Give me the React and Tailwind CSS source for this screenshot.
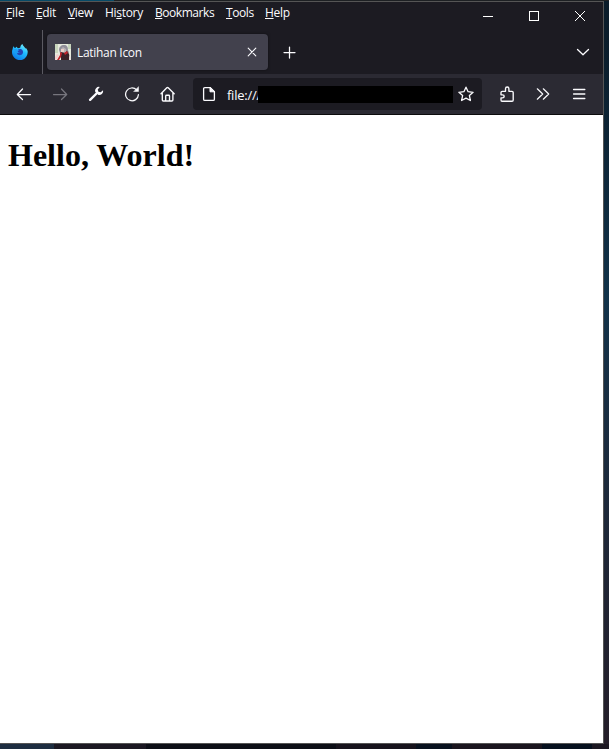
const UI = "font-['Open_Sans','Noto_Sans',sans-serif]";

const menus = [
  { pre: '', key: 'F', post: 'ile', cls: 'w-[30px] tracking-[-0.1px]' },
  { pre: '', key: 'E', post: 'dit', cls: 'w-8 tracking-[-0.35px]' },
  { pre: '', key: 'V', post: 'iew', cls: 'w-[37px] tracking-[-0.3px]' },
  { pre: 'Hi', key: 's', post: 'tory', cls: 'w-[50px] tracking-[-0.3px]' },
  { pre: '', key: 'B', post: 'ookmarks', cls: 'w-[71px] tracking-[-0.45px]' },
  { pre: '', key: 'T', post: 'ools', cls: 'w-[39px] tracking-[-0.4px]' },
  { pre: '', key: 'H', post: 'elp', cls: 'w-[30px] tracking-[-0.3px]' },
];

function Icon({ children, size = 16, className = '' }) {
  return (
    <svg width={size} height={size} viewBox={`0 0 ${size} ${size}`} fill="none" stroke="currentColor"
      strokeWidth="1.25" strokeLinecap="round" strokeLinejoin="round" className={`shrink-0 ${className}`}>
      {children}
    </svg>
  );
}

function ToolButton({ children, className = '' }) {
  return <button className={`flex h-8 w-9 shrink-0 items-center justify-center ${className}`}>{children}</button>;
}

function FirefoxLogo() {
  return (
    <svg width="16" height="16" viewBox="0 0 16 16" className="shrink-0">
      <defs>
        <linearGradient id="body" x1="0.85" y1="0" x2="0.3" y2="1">
          <stop offset="0" stopColor="#7df0fb" />
          <stop offset="0.45" stopColor="#1fbcff" />
          <stop offset="1" stopColor="#0b78ea" />
        </linearGradient>
      </defs>
      <path d="M15.7 7.2C15.3 5.4 14.3 4.2 13.5 3.7l.2 1.2C12.7 2.5 10.6 2 10.5 0 8.8 1 8.3 2.7 8.2 3.8c-.9 0-1.6.2-2.2.5C5 3.7 4.8 2.7 4.8 2.7 3.9 3.1 3.2 4 3.2 4L2.4 3.8C2 3.2 2 2.3 2 2.3 1 3 .7 4.3.7 4.8.1 5.9 0 7.1 0 8.2c0 4.3 3.6 7.8 8 7.8s8-3.6 7.7-8.8z" fill="url(#body)" />
      <path d="M6.2 5.6c1.2-1 3.3-.8 4.3.6 1 1.5.6 3.7-1 4.5-1.6.9-3.9.4-4.5-1.1L4.5 7.8z" fill="#2443b5" />
      <path d="M2.2 5.4c.9-.5 1.9-.3 2.7.1.8.6 1.4.6 2.2 1-.5.5-1.4.7-1.4 1.3.2.7 1.3.7 2 .5-.7 1-2 1-2.9.8C3.4 8.8 2.2 7.2 2.2 5.4z" fill="#1c9bf5" />
    </svg>
  );
}

function Favicon() {
  return (
    <svg width="16" height="16" viewBox="0 0 16 16" className="shrink-0">
      <rect width="16" height="16" fill="#e7eade" />
      <path d="M0 0h3v9H0zM13 0h3v5h-3z" fill="#c9d6bd" />
      <path d="M4 6c0-3 2-5 5-5s4 2 4 5l1 3-3 1-6-1z" fill="#918f99" />
      <path d="M6 5l2-2 3 2v4H6z" fill="#bbb4b7" />
      <path d="M6 5h3v3H6z" fill="#ead0c8" />
      <path d="M6 8l4 1 2-2 2 3 1 6H6z" fill="#3b2128" />
      <path d="M5 8l2 1-1 4-2 3H2l3-5zM9 9l3-2 1 2-3 2z" fill="#c2232c" />
      <path d="M14 12l2 1v3h-2z" fill="#e6dedb" />
      <path d="M2 10l2 1-2 4-2 1v-3z" fill="#f2cfcd" />
    </svg>
  );
}

function MenuBar() {
  return (
    <div className="flex h-7 shrink-0 justify-between">
      <nav className="flex h-[22px] pl-1.5 text-[12px] leading-[22px] text-[#fbfbfe]">
        {menus.map((m) => (
          <span key={m.key + m.post} className={`shrink-0 whitespace-nowrap ${m.cls}`}>
            {m.pre}<span className="underline decoration-1 underline-offset-1">{m.key}</span>{m.post}
          </span>
        ))}
      </nav>
      <div className="flex text-white">
        <div className="flex w-[46px] items-center justify-center"><i className="h-px w-2.5 bg-white" /></div>
        <div className="flex w-[46px] items-center justify-center"><i className="size-2.5 border border-white" /></div>
        <div className="flex w-[46px] items-center justify-center">
          <svg width="10" height="10" viewBox="0 0 10 10" stroke="currentColor" strokeWidth="1"><path d="M0 0l10 10M10 0L0 10" /></svg>
        </div>
      </div>
    </div>
  );
}

function TabStrip() {
  return (
    <div className="flex h-11 shrink-0 items-center">
      <div className="flex h-full w-[43px] items-center border-r border-[#5b5a62] pl-3"><FirefoxLogo /></div>
      <div className="ml-1 flex h-9 w-[221px] items-center rounded bg-[#42414d] px-2 shadow-[0_0_3px_rgba(0,0,0,0.5)]">
        <Favicon />
        <span className="ml-1.5 grow pt-0.5 text-[12px] leading-4 tracking-[-0.3px]">Latihan Icon</span>
        <Icon><path d="M4.2 4.2l7.6 7.6M11.8 4.2l-7.6 7.6" strokeWidth="1.1" /></Icon>
      </div>
      <div className="ml-[13px] flex">
        <Icon><path d="M8.5 3v11M3 8.5h11" strokeWidth="1.25" /></Icon>
      </div>
      <div className="ml-auto flex pr-3">
        <Icon><path d="M2.5 5.5L8 10.8l5.5-5.3" strokeWidth="1.3" /></Icon>
      </div>
    </div>
  );
}

function NavBar() {
  return (
    <div className="flex h-10 shrink-0 items-center bg-[#2b2a33] pl-1.5">
      <ToolButton><Icon><path d="M14.5 8.5h-13M6.5 3L1.3 8.5l5.2 5" /></Icon></ToolButton>
      <ToolButton className="text-[#77767e]"><Icon><path d="M1.5 8.5h13M9.5 3l5.2 5.5-5.2 5" /></Icon></ToolButton>
      <ToolButton>
        <Icon>
          <path d="M2.1 13.8L8.5 7.5" strokeWidth="2.4" />
          <path d="M11.8.9A3.9 3.9 0 0 0 7.3 6l2.8 2.8a3.9 3.9 0 0 0 4.9-4.6l-2.3 2-2.3-.4-.7-2.4z" fill="currentColor" stroke="none" />
        </Icon>
      </ToolButton>
      <ToolButton>
        <Icon>
          <path d="M12.6 3.9A6.4 6.4 0 1 0 14.4 8.7" />
          <path d="M14.5 1v4.5H10z" fill="currentColor" strokeWidth="0.5" />
        </Icon>
      </ToolButton>
      <ToolButton><Icon><path d="M1 7.8L6.8 1.8q.7-.6 1.4 0L14.2 7.8M2.3 7v6.9q0 1.1 1.1 1.1h8.4q1.1 0 1.1-1.1V7M5.7 14.7V10q0-.8.8-.8h2.2q.8 0 .8.8v4.7" strokeWidth="1.35" /></Icon></ToolButton>

      <div className="ml-[7px] flex h-8 w-[289px] shrink-0 items-center rounded bg-[#1c1b22] pl-2">
        <Icon>
          <path d="M9.3 1.6H3.8q-1.2 0-1.2 1.2v10.4q0 1.2 1.2 1.2h8.4q1.2 0 1.2-1.2V5.7z" strokeWidth="1.3" />
          <path d="M9 1.6v4.2h4.3z" fill="currentColor" strokeWidth="1" />
        </Icon>
        <span className="ml-[10px] w-[31px] shrink-0 whitespace-nowrap pt-0.5 text-[13px] leading-[18px] tracking-[-0.25px]">file:///</span>
        <span className="relative h-[17px] w-[195px] shrink-0 bg-black" />
        <Icon className="ml-[5px]"><path d="M8 1.2l2.1 4.5 5 .6-3.7 3.3 1 4.9L8 12.1l-4.4 2.4 1-4.9L.9 6.3l5-.6z" strokeWidth="1.3" /></Icon>
      </div>

      <div className="ml-[7px] flex">
        <ToolButton><Icon><path d="M3 15.2h10q1.2 0 1.2-1.2V6.5q0-1.2-1.2-1.2H9.9V2.8q0-1.8-1.7-1.8T6.5 2.8v2.5H3.2q-1.2 0-1.2 1.2v2.3h1.5q1.7 0 1.7 1.5t-1.7 1.5H2V14q0 1.2 1 1.2z" strokeWidth="1.35" /></Icon></ToolButton>
        <ToolButton><Icon><path d="M2.3 2.8L7.7 8l-5.4 5.2M8.3 2.8L13.7 8l-5.4 5.2" strokeWidth="1.2" /></Icon></ToolButton>
        <ToolButton><Icon><path d="M2.6 3.5h11.2M2.6 8h11.2M2.6 12.5h11.2" strokeWidth="1.4" /></Icon></ToolButton>
      </div>
    </div>
  );
}

export default function App() {
  return (
    <div className={`flex h-[749px] w-[609px] flex-col overflow-hidden bg-[#10131b] text-[#fbfbfe] ${UI}`}>
      <div className="flex h-px shrink-0">
        <div className="w-[114px] bg-[#064a67]" />
        <div className="grow bg-[#1d2023]" />
      </div>
      <div className="flex h-[743px] shrink-0">
        <div className="flex w-[604px] shrink-0 flex-col border-b border-r border-t border-[#555555] bg-[#1c1b22]">
          <MenuBar />
          <TabStrip />
          <NavBar />
          <main className="grow border-t border-[#0c0c0d] bg-white pl-2 pt-[22px] text-black">
            <h1 className="font-['Liberation_Serif','Times_New_Roman',serif] text-[32px] font-bold leading-[37px]">Hello, World!</h1>
          </main>
        </div>
        <div className="w-[5px] bg-linear-to-b from-[#0a1c2a] from-5% via-[#12334a] via-40% to-[#241e29]" />
      </div>
      <div className="flex h-[5px] shrink-0">
        <div className="w-[54px] bg-[#1d2d40]" />
        <div className="w-[92px] bg-[#1b1822]" />
        <div className="w-[190px] bg-[#0c0e16]" />
        <div className="w-[80px] bg-[#17131c]" />
        <div className="w-[36px] bg-[#08111e]" />
        <div className="w-[90px] bg-[#1a151e]" />
        <div className="w-[50px] bg-[#06101e]" />
        <div className="grow bg-[#1c1822]" />
      </div>
    </div>
  );
}
